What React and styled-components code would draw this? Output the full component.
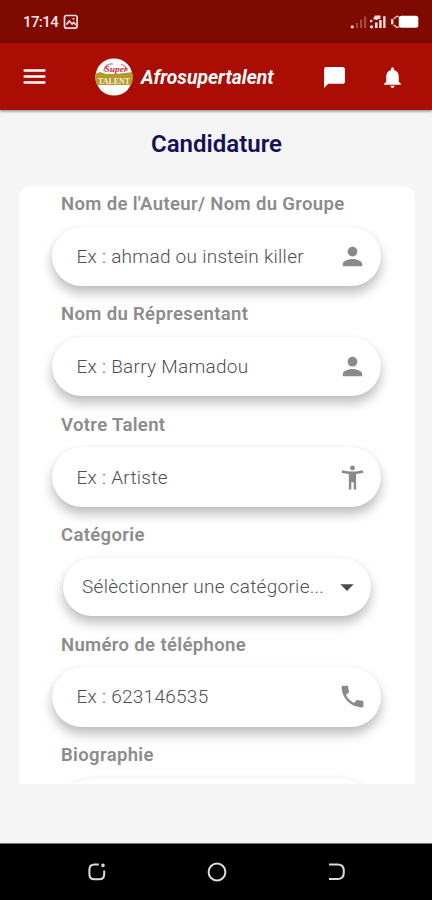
import React from 'react';
import styled, { createGlobalStyle, css } from 'styled-components';
import {
  MdMenu,
  MdChatBubble,
  MdNotifications,
  MdPerson,
  MdAccessibilityNew,
  MdPhone,
  MdArrowDropDown
} from 'react-icons/md';

const fields = [
  { label: "Nom de l'Auteur/ Nom du Groupe", text: 'Ex : ahmad ou instein killer', icon: MdPerson },
  { label: 'Nom du Répresentant', text: 'Ex : Barry Mamadou', icon: MdPerson },
  { label: 'Votre Talent', text: 'Ex : Artiste', icon: MdAccessibilityNew },
  { label: 'Catégorie', text: 'Sélèctionner une catégorie...', icon: MdArrowDropDown, select: true },
  { label: 'Numéro de téléphone', text: 'Ex : 623146535', icon: MdPhone },
  { label: 'Biographie', text: '', select: true }
];

const Field = ({ label, text, icon: Icon, select }) => (
  <FieldStyled $select={select}>
    <LabelStyled>{label}</LabelStyled>
    <PillStyled $select={select}>
      <PlaceholderStyled>{text}</PlaceholderStyled>
      {Icon && <Icon size={select ? 32 : 29} />}
    </PillStyled>
  </FieldStyled>
);

const PictureIcon = () => (
  <svg width="16" height="16" viewBox="0 0 16 16" fill="none" stroke="#f0dcda" strokeWidth="1.7">
    <rect x="1.5" y="1.5" width="12.6" height="12.6" rx="2" />
    <path d="M3.4 10.6 6.3 7l2.8 3 1.5-1.6 2.4 2.6" />
    <path d="M9.6 4.8h1.8" />
  </svg>
);

const StatusIcons = () => (
  <svg width="70" height="16" viewBox="0 0 70 16">
    <circle cx="2.2" cy="12.8" r="1.6" fill="#f7e3dc" />
    <g fill="#a5483f">
      <rect x="6" y="9" width="2" height="5" />
      <rect x="10" y="5.5" width="2.2" height="8.5" />
      <rect x="14" y="2.5" width="2.2" height="11.5" />
    </g>
    <g fill="#f3dfdd">
      <circle cx="21.5" cy="12.8" r="1.6" />
      <circle cx="21.2" cy="7" r="1.3" />
      <rect x="25" y="8.5" width="2.6" height="5.5" />
      <rect x="29.2" y="6" width="2.5" height="8" />
      <rect x="33.2" y="2.2" width="2.3" height="11.8" />
      <path d="M23 5l2-3.6h5.5v3.2l-4 1.4z" />
    </g>
    <path d="M49 2.4h-2.4l-3 2.4M49 13.2h-2.4l-3-2.4" fill="none" stroke="#e3b8b4" strokeWidth="1.5" />
    <rect x="41" y="5" width="2.4" height="5.6" rx="1" fill="#f7e3dc" />
    <rect x="48.8" y="1.7" width="19.5" height="12.1" rx="2.5" fill="#fff" />
  </svg>
);

const Logo = () => (
  <svg width="38" height="38" viewBox="0 0 38 38">
    <defs>
      <clipPath id="logo-clip">
        <circle cx="19" cy="19" r="18.6" />
      </clipPath>
    </defs>
    <circle cx="19" cy="19" r="18.6" fill="#fff" />
    <path d="M0 16l5-2 6 2h10l8-1 9-1v13H0z" fill="#b39a2c" clipPath="url(#logo-clip)" />
    <path
      d="M9 13c0-5 5-8 9-7M26 6c3 1 6 4 6 7"
      fill="none"
      stroke="#d96a76"
      strokeWidth="1.2"
    />
    <LogoTextStyled x="19" y="26" fontSize="9" textLength="32" lengthAdjust="spacingAndGlyphs" fill="#f6f1df">
      TALENT
    </LogoTextStyled>
    <LogoTextStyled
      x="21"
      y="14"
      fontSize="9"
      fontStyle="italic"
      textLength="23"
      lengthAdjust="spacingAndGlyphs"
      fill="#c92a3c"
    >
      Super
    </LogoTextStyled>
  </svg>
);

const App = () => (
  <>
    <GlobalStyle />
    <ScreenStyled>
      <StatusBarStyled>
        <ClockStyled>17:14</ClockStyled>
        <PictureIcon />
        <SpacerStyled />
        <StatusIcons />
      </StatusBarStyled>
      <AppBarStyled>
        <MdMenu size={29} />
        <BrandStyled>
          <Logo />
          <BrandNameStyled>Afrosupertalent</BrandNameStyled>
        </BrandStyled>
        <SpacerStyled />
        <ActionsStyled>
          <MdChatBubble size={25} />
          <MdNotifications size={25} />
        </ActionsStyled>
      </AppBarStyled>
      <MainStyled>
        <TitleStyled>Candidature</TitleStyled>
        <CardStyled>
          {fields.map(field => (
            <Field key={field.label} {...field} />
          ))}
        </CardStyled>
      </MainStyled>
      <NavBarStyled>
        <svg width="20" height="20" viewBox="0 0 20 20">
          <path d="M11.8 2.4H7.6Q2.4 2.4 2.4 7.4v4.8q0 5 5 5h4.8q5 0 5-5V8.4" />
          <circle cx="16" cy="3.4" r="0.8" />
        </svg>
        <svg width="20" height="20" viewBox="0 0 20 20">
          <circle cx="10" cy="10" r="8.4" />
        </svg>
        <svg width="20" height="20" viewBox="0 0 20 20">
          <path d="M2 2.4h8.5q6.3 0 6.3 6.3v2.1q0 6.3-6.3 6.3H2" />
        </svg>
      </NavBarStyled>
    </ScreenStyled>
  </>
);

export default App;

const GlobalStyle = createGlobalStyle`
  * {
    box-sizing: border-box;
  }

  body {
    margin: 0;
    font-family: Roboto, sans-serif;
  }

  svg {
    display: block;
    flex-shrink: 0;
  }
`;

const ScreenStyled = styled.div`
  display: flex;
  flex-direction: column;
  width: 432px;
  height: 900px;
  overflow: hidden;
  background: #f5f5f5;
`;

const StatusBarStyled = styled.header`
  display: flex;
  align-items: center;
  flex-shrink: 0;
  height: 43px;
  padding: 0 12px 0 23px;
  background: #7e0a02;
`;

const ClockStyled = styled.span`
  width: 35px;
  margin-right: 5px;
  color: #f5e6e4;
  font-size: 15px;
  font-weight: 500;
  letter-spacing: -0.6px;
  white-space: nowrap;
`;

const SpacerStyled = styled.div`
  flex: 1;
`;

const AppBarStyled = styled.div`
  z-index: 1;
  display: flex;
  align-items: center;
  flex-shrink: 0;
  height: 67px;
  padding: 0 27px 0 20px;
  color: #fff;
  background: #a90d04;
  box-shadow: 0 1px 3px rgba(0, 0, 0, 0.5);
`;

const BrandStyled = styled.div`
  display: flex;
  align-items: center;
  gap: 8px;
  margin-left: 46px;
`;

const LogoTextStyled = styled.text`
  font-family: 'Liberation Serif', serif;
  font-weight: 700;
  text-anchor: middle;
`;

const BrandNameStyled = styled.span`
  padding-top: 1px;
  font-size: 19.3px;
  font-style: italic;
  font-weight: 700;
`;

const ActionsStyled = styled.div`
  display: flex;
  gap: 33px;
  padding-top: 1px;
`;

const MainStyled = styled.main`
  display: flex;
  flex: 1;
  flex-direction: column;
  padding: 17px 17px 59px 19px;
`;

const TitleStyled = styled.h1`
  height: 32px;
  margin: 0 0 27px;
  padding-right: 1px;
  color: #151057;
  font-size: 24px;
  font-weight: 600;
  line-height: 34px;
  text-align: center;
`;

const CardStyled = styled.section`
  height: 598px;
  padding: 7px 34px 0 33px;
  overflow: hidden;
  border-radius: 12px 12px 0 0;
  background: #fff;
`;

const FieldStyled = styled.div`
  height: ${props => (props.$select ? '109.5px' : '110.4px')};
`;

const LabelStyled = styled.div`
  height: 22px;
  margin: 0 0 11.5px 9px;
  color: #8c8c8c;
  font-size: 18.5px;
  font-weight: 600;
  letter-spacing: 0.35px;
  line-height: 22px;
  white-space: nowrap;
`;

const PillStyled = styled.div`
  display: flex;
  align-items: center;
  justify-content: space-between;
  height: 59.5px;
  padding: 0 14px 0 24.5px;
  border-radius: 30px;
  color: #8a8a8a;
  background: #fff;
  box-shadow: 0 7px 12px rgba(0, 0, 0, 0.26), 0 0 3px rgba(0, 0, 0, 0.05);

  ${props =>
    props.$select &&
    css`
      height: 58.5px;
      margin: 0 10.5px 0 11px;
      padding: 0 7.5px 0 19px;
      color: #4d4d4d;
    `}
`;

const PlaceholderStyled = styled.span`
  color: #505050;
  font-size: 19px;
  font-weight: 300;
  letter-spacing: 0.27px;
  white-space: nowrap;
`;

const NavBarStyled = styled.nav`
  display: flex;
  align-items: center;
  justify-content: space-between;
  flex-shrink: 0;
  height: 57px;
  padding: 0 85px 0 87px;
  border-top: 1px solid #777;
  background: #000;

  svg {
    fill: none;
    stroke: #ddd;
    stroke-width: 2;
  }
`;
